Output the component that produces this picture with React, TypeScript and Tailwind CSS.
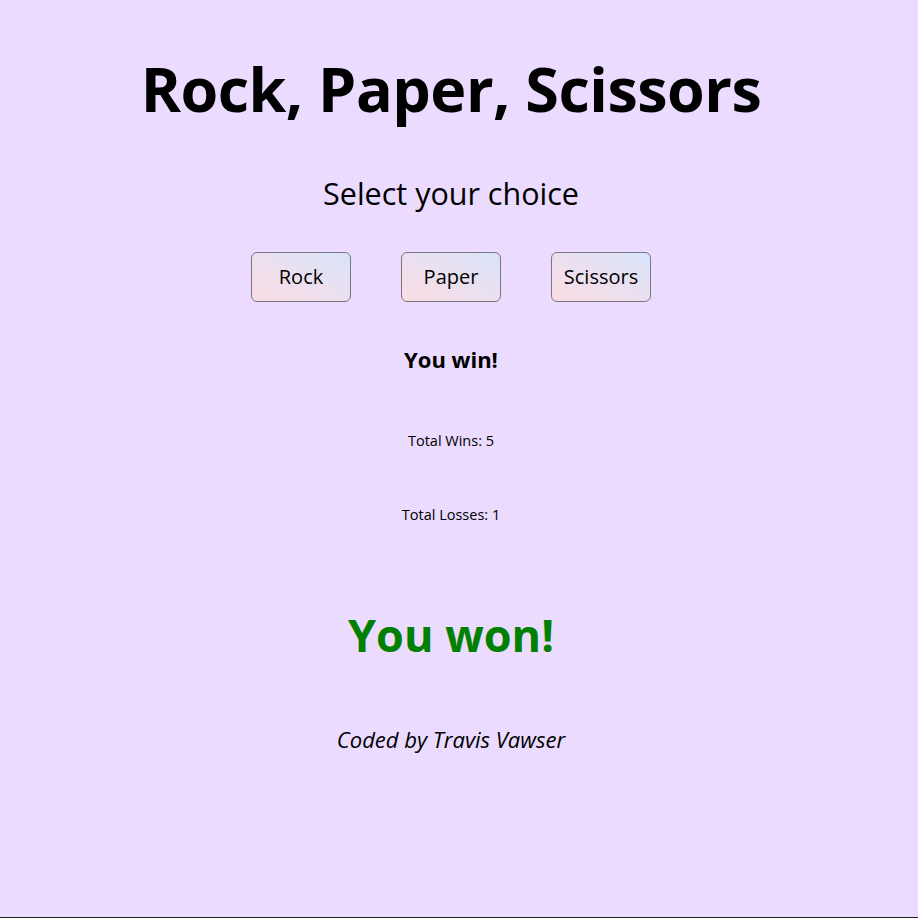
import React from "react";

export default function App() {
  const btn =
    "w-[100px] h-[50px] rounded-[6px] border border-[#7a7680] bg-gradient-to-tr from-[#fbdde3] to-[#d9e3fb] text-[20px] text-black flex items-center justify-center";
  return (
    <div
      className="w-full h-[918px] bg-[#1e1e1e]"
      style={{ fontFamily: '"Open Sans", "Noto Sans", sans-serif' }}
    >
      <div className="h-[917px] bg-[#eadbff] flex flex-col items-center pr-[16px] text-black">
        <div className="mt-[50px] h-[76px] flex items-center justify-center">
          <h1 className="text-[61px] font-bold leading-none tracking-[-0.5px]">Rock, Paper, Scissors</h1>
        </div>
        <div className="mt-[47px] h-[40px] flex items-center justify-center">
          <p className="text-[30.5px] leading-none">Select your choice</p>
        </div>
        <div className="mt-[39px] h-[50px] flex gap-[50px]">
          <button className={btn}>Rock</button>
          <button className={btn}>Paper</button>
          <button className={btn}>Scissors</button>
        </div>
        <div className="mt-[42px] h-[30px] flex items-center justify-center">
          <p className="text-[22px] font-bold leading-none">You win!</p>
        </div>
        <div className="mt-[57px] h-[20px] flex items-center justify-center">
          <p className="text-[14.5px] leading-none">Total Wins: 5</p>
        </div>
        <div className="mt-[54px] h-[20px] flex items-center justify-center">
          <p className="text-[14.5px] leading-none">Total Losses: 1</p>
        </div>
        <div className="mt-[79px] h-[60px] flex items-center justify-center">
          <p className="text-[45px] font-bold leading-none text-[#008000]">You won!</p>
        </div>
        <div className="mt-[60px] h-[30px] flex items-center justify-center">
          <p className="text-[22px] italic leading-none">Coded by Travis Vawser</p>
        </div>
      </div>
    </div>
  );
}
